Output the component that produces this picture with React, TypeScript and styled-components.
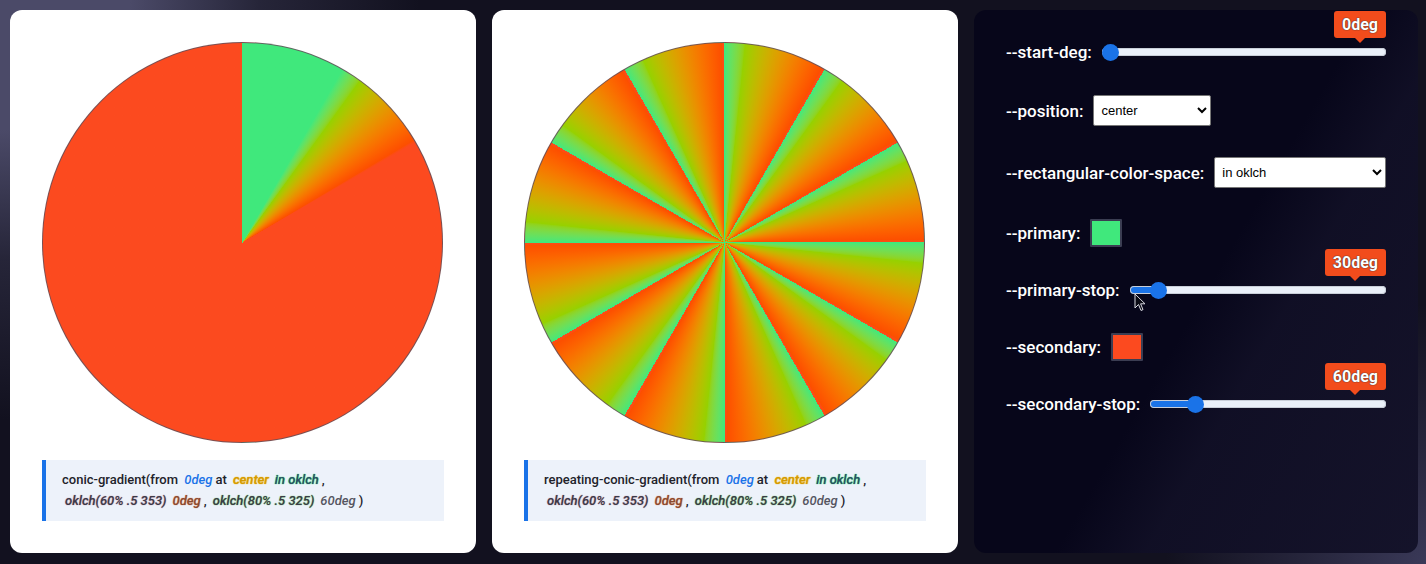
import React, { useState } from "react";
import styled, { createGlobalStyle } from "styled-components";

const PRIMARY = "#40e87c";
const SECONDARY = "#fc4a1f";

const Global = createGlobalStyle`
  html, body { margin: 0; padding: 0; }
  body {
    width: 1426px;
    height: 564px;
    overflow: hidden;
    font-family: Roboto, "Noto Sans", sans-serif;
    background:
      radial-gradient(circle at 0 0, #4b4a68 0, #4b4a68 130px, rgba(75,74,104,0.35) 260px, transparent 420px),
      radial-gradient(circle at 100% 100%, #3a3958 0, rgba(58,57,88,0.5) 120px, transparent 260px),
      #12111f;
  }
`;

const Page = styled.main`
  display: grid;
  grid-template-columns: 466px 466px 444px;
  grid-template-rows: 543px;
  gap: 16px;
  padding: 10px;
`;

const Card = styled.section`
  background: #fff;
  border-radius: 12px;
  padding: 32px;
  display: flex;
  flex-direction: column;
  gap: 17px;
`;

const Pie = styled.div<{ $bg: string }>`
  width: 401px;
  height: 401px;
  box-sizing: border-box;
  border-radius: 50%;
  border: 1px solid rgba(100, 80, 90, 0.85);
  background: ${(p) => p.$bg};
`;

const CodeBox = styled.div`
  height: 61px;
  box-sizing: border-box;
  background: #edf2fa;
  border-left: 4px solid #1a73e8;
  padding: 9px 16px;
  font-size: 13px;
  line-height: 21px;
  color: #22222a;
  font-weight: 500;
`;

const Tok = styled.span<{ $c: string; $glow?: string }>`
  font-style: italic;
  font-weight: 500;
  margin: 0 3px;
  color: ${(p) => p.$c};
  text-shadow: ${(p) => (p.$glow ? `0 0 1px ${p.$glow}, 0 0 1px ${p.$glow}` : "none")};
`;

const Panel = styled.aside`
  position: relative;
  border-radius: 12px;
  background:
    linear-gradient(120deg, transparent 0 52%, rgba(34, 32, 58, 0.35) 64%, rgba(34, 32, 58, 0.5) 100%),
    #07061a;
  padding: 30px 32px;
  display: flex;
  flex-direction: column;
  gap: 31px;
`;

const Row = styled.div`
  display: flex;
  align-items: center;
  gap: 10px;
  min-height: 24px;
`;

const Label = styled.label`
  color: #fff;
  font-size: 17px;
  font-weight: 500;
  white-space: nowrap;
  line-height: 24px;
`;

const SliderWrap = styled.div`
  position: relative;
  flex: 1;
  display: flex;
  align-items: center;
  height: 24px;
`;

const Range = styled.input<{ $frac: number }>`
  -webkit-appearance: none;
  appearance: none;
  width: 100%;
  height: 8px;
  margin: 0;
  border-radius: 4px;
  outline: none;
  box-shadow: inset 0 0 0 1px #c8ced8;
  background: linear-gradient(
    to right,
    #1a73e8 0 calc(8.5px + ${(p) => p.$frac} * (100% - 17px)),
    #eaf0f9 calc(8.5px + ${(p) => p.$frac} * (100% - 17px)) 100%
  );
  &::-webkit-slider-thumb {
    -webkit-appearance: none;
    width: 17px;
    height: 17px;
    border-radius: 50%;
    background: #1a73e8;
    border: none;
  }
`;

const Bubble = styled.output`
  position: absolute;
  right: 0;
  bottom: calc(50% + 14px);
  background: #f24c1c;
  color: #fff;
  font-size: 16px;
  font-weight: 700;
  line-height: 21px;
  padding: 3px 8px;
  border-radius: 3px;
  text-shadow: 0 0 1px #333, 0 0 1px #333;
  &::after {
    content: "";
    position: absolute;
    left: 50%;
    top: 100%;
    transform: translateX(-50%);
    border: 5px solid transparent;
    border-top-color: #f24c1c;
    border-bottom: none;
  }
`;

const Select = styled.select<{ $w: number }>`
  width: ${(p) => p.$w}px;
  height: 31px;
  box-sizing: border-box;
  font-family: "Liberation Sans", Arial, sans-serif;
  font-size: 13px;
  color: #000;
  background: #fff;
  border: 1px solid #767676;
  border-radius: 2px;
  padding: 0 3px;
`;

const Swatch = styled.input`
  -webkit-appearance: none;
  appearance: none;
  width: 32px;
  height: 28px;
  box-sizing: border-box;
  padding: 0;
  border: 2px solid #3b3d52;
  border-radius: 1px;
  background: none;
  cursor: pointer;
  &::-webkit-color-swatch-wrapper { padding: 0; }
  &::-webkit-color-swatch { border: none; border-radius: 0; }
`;

const Cursor = styled.svg`
  position: absolute;
  left: 160px;
  top: 283px;
  pointer-events: none;
`;

function Slider({ id, value, max = 360 }: { id: string; value: number; max?: number }) {
  const [v, setV] = useState(value);
  return (
    <SliderWrap>
      <Range
        id={id}
        type="range"
        min={0}
        max={max}
        value={v}
        $frac={v / max}
        onChange={(e) => setV(Number(e.target.value))}
      />
      <Bubble htmlFor={id}>{v}deg</Bubble>
    </SliderWrap>
  );
}

function Code({ fn }: { fn: string }) {
  return (
    <CodeBox>
      {fn}(from <Tok $c="#1a73e8">0deg</Tok>at <Tok $c="#d49a00" $glow="#f0c040">center</Tok>
      <Tok $c="#2e4a66" $glow="#40e87c">in oklch</Tok>,
      <br />
      <Tok $c="#3a3a48" $glow="#c9a0b0">oklch(60% .5 353)</Tok>
      <Tok $c="#8a4a30" $glow="#e0a080">0deg</Tok>,{" "}
      <Tok $c="#3a3a48" $glow="#8ad080">oklch(80% .5 325)</Tok>
      <Tok $c="#55555f">60deg</Tok>)
    </CodeBox>
  );
}

export default function App() {
  const grad = `from 0deg at center in oklch, ${PRIMARY} 30deg, ${SECONDARY} 60deg`;
  return (
    <>
      <Global />
      <Page>
        <Card>
          <Pie $bg={`conic-gradient(${grad})`} />
          <Code fn="conic-gradient" />
        </Card>
        <Card>
          <Pie $bg={`repeating-conic-gradient(${grad})`} />
          <Code fn="repeating-conic-gradient" />
        </Card>
        <Panel>
          <Row>
            <Label htmlFor="start">--start-deg:</Label>
            <Slider id="start" value={0} />
          </Row>
          <Row>
            <Label htmlFor="pos">--position:</Label>
            <Select id="pos" $w={118} defaultValue="center">
              <option value="center">center</option>
              <option value="top">top</option>
              <option value="left">left</option>
            </Select>
          </Row>
          <Row>
            <Label htmlFor="space">--rectangular-color-space:</Label>
            <Select id="space" $w={176} defaultValue="in oklch">
              <option value="in oklch">in oklch</option>
              <option value="in srgb">in srgb</option>
              <option value="in oklab">in oklab</option>
            </Select>
          </Row>
          <Row>
            <Label htmlFor="primary">--primary:</Label>
            <Swatch id="primary" type="color" defaultValue={PRIMARY} />
          </Row>
          <Row>
            <Label htmlFor="pstop">--primary-stop:</Label>
            <Slider id="pstop" value={30} />
          </Row>
          <Row>
            <Label htmlFor="secondary">--secondary:</Label>
            <Swatch id="secondary" type="color" defaultValue={SECONDARY} />
          </Row>
          <Row>
            <Label htmlFor="sstop">--secondary-stop:</Label>
            <Slider id="sstop" value={60} />
          </Row>
          <Cursor width="12" height="19" viewBox="0 0 12 19">
            <path d="M1 1 L1 15 L4.5 11.5 L7 17.5 L9 16.6 L6.6 10.8 L11 10.8 Z" fill="#0a0a14" stroke="#d8d8e0" strokeWidth="1" strokeLinejoin="round" />
          </Cursor>
        </Panel>
      </Page>
    </>
  );
}
